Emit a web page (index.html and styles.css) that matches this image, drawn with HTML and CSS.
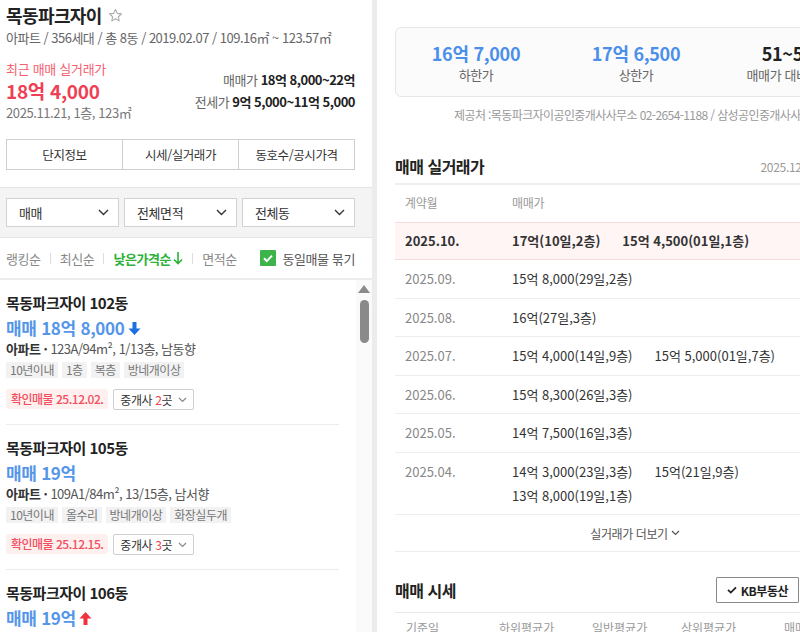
FILE: index.html
```html
<!DOCTYPE html>
<html lang="ko">
<head>
<meta charset="utf-8">
<title>목동파크자이</title>
<link rel="stylesheet" href="styles.css">
</head>
<body>
<div class="app">
  <aside class="left">
    <section class="complex">
      <h1 class="complex-title">목동파크자이
        <svg class="star" width="15" height="15" viewBox="0 0 24 24"><path d="M12 2.5l2.9 6.1 6.6.8-4.9 4.6 1.3 6.6L12 17.3l-5.9 3.3 1.3-6.6-4.9-4.6 6.6-.8z" fill="none" stroke="#a9a9a9" stroke-width="1.7" stroke-linejoin="round"/></svg>
      </h1>
      <p class="complex-meta">아파트 / 356세대 / 총 8동 / 2019.02.07 / 109.16㎡ ~ 123.57㎡</p>
      <div class="complex-prices">
        <div class="recent">
          <p class="recent-label">최근 매매 실거래가</p>
          <p class="recent-price">18억 4,000</p>
          <p class="recent-date">2025.11.21, 1층, 123㎡</p>
        </div>
        <div class="ranges">
          <p><span class="range-label">매매가</span> <b>18억 8,000~22억</b></p>
          <p><span class="range-label">전세가</span> <b>9억 5,000~11억 5,000</b></p>
        </div>
      </div>
      <nav class="tabs">
        <span class="tab">단지정보</span>
        <span class="tab">시세/실거래가</span>
        <span class="tab">동호수/공시가격</span>
      </nav>
    </section>

    <section class="filters">
      <div class="select">매매<svg width="11" height="7" viewBox="0 0 11 7"><path d="M1 1l4.5 4.5L10 1" fill="none" stroke="#333" stroke-width="1.4"/></svg></div>
      <div class="select">전체면적<svg width="11" height="7" viewBox="0 0 11 7"><path d="M1 1l4.5 4.5L10 1" fill="none" stroke="#333" stroke-width="1.4"/></svg></div>
      <div class="select">전체동<svg width="11" height="7" viewBox="0 0 11 7"><path d="M1 1l4.5 4.5L10 1" fill="none" stroke="#333" stroke-width="1.4"/></svg></div>
    </section>

    <section class="sortbar">
      <span class="sort">랭킹순</span><i class="sep"></i>
      <span class="sort">최신순</span><i class="sep"></i>
      <span class="sort active">낮은가격순<svg width="10" height="14" viewBox="0 0 10 14"><path d="M5 1v11.5M1 8.5l4 4 4-4" fill="none" stroke="#2bb13a" stroke-width="1.6"/></svg></span><i class="sep"></i>
      <span class="sort">면적순</span>
      <label class="group-check"><span class="checkbox"><svg width="16" height="16" viewBox="0 0 16 16"><path d="M4 8.3l2.8 2.8L12 5.6" fill="none" stroke="#fff" stroke-width="2"/></svg></span>동일매물 묶기</label>
    </section>

    <div class="listing-wrap">
      <ul class="listings">
        <li class="item">
          <p class="item-title">목동파크자이 102동</p>
          <p class="item-price">매매 18억 8,000<svg class="trend" width="13" height="15" viewBox="0 0 13 15"><path d="M4.5 1h4v6.5h4L6.5 14 .5 7.5h4z" fill="#1c6fe0"/></svg></p>
          <p class="item-info"><b>아파트 ·</b> 123A/94m², 1/13층, 남동향</p>
          <div class="tags"><span>10년이내</span><span>1층</span><span>복층</span><span>방네개이상</span></div>
          <div class="item-foot"><span class="confirm">확인매물 25.12.02.</span><span class="brokers">중개사 <em>2</em>곳<svg width="9" height="6" viewBox="0 0 9 6"><path d="M1 1l3.5 3.5L8 1" fill="none" stroke="#888" stroke-width="1.2"/></svg></span></div>
        </li>
        <li class="item">
          <p class="item-title">목동파크자이 105동</p>
          <p class="item-price">매매 19억</p>
          <p class="item-info"><b>아파트 ·</b> 109A1/84m², 13/15층, 남서향</p>
          <div class="tags"><span>10년이내</span><span>올수리</span><span>방네개이상</span><span>화장실두개</span></div>
          <div class="item-foot"><span class="confirm">확인매물 25.12.15.</span><span class="brokers">중개사 <em>3</em>곳<svg width="9" height="6" viewBox="0 0 9 6"><path d="M1 1l3.5 3.5L8 1" fill="none" stroke="#888" stroke-width="1.2"/></svg></span></div>
        </li>
        <li class="item">
          <p class="item-title">목동파크자이 106동</p>
          <p class="item-price">매매 19억<svg class="trend" width="13" height="15" viewBox="0 0 13 15"><path d="M4.5 14h4V7.5h4L6.5 1 .5 7.5h4z" fill="#f0323f"/></svg></p>
        </li>
      </ul>
      <div class="scrollbar">
        <span class="scroll-up"></span>
        <span class="scroll-thumb"></span>
      </div>
    </div>
  </aside>

  <div class="divider"></div>

  <main class="right">
    <div class="right-inner">
      <div class="summary">
        <div class="stat"><strong class="blue">16억 7,000</strong><span>하한가</span></div>
        <i class="stat-sep"></i>
        <div class="stat"><strong class="blue">17억 6,500</strong><span>상한가</span></div>
        <i class="stat-sep"></i>
        <div class="stat"><strong>51~56%</strong><span>매매가 대비 전세가</span></div>
      </div>
      <p class="source">제공처 :목동파크자이공인중개사사무소 02-2654-1188 / 삼성공인중개사사무소 02-2646-0000</p>

      <div class="section-head">
        <h2>매매 실거래가</h2>
        <span class="stamp">2025.12.18 기준</span>
      </div>
      <div class="deals">
        <div class="deal-row deal-head"><span class="month">계약월</span><span class="prices">매매가</span></div>
        <div class="deal-row current"><span class="month">2025.10.</span><span class="prices"><span>17억(10일,2층)</span><span>15억 4,500(01일,1층)</span></span></div>
        <div class="deal-row"><span class="month">2025.09.</span><span class="prices"><span>15억 8,000(29일,2층)</span></span></div>
        <div class="deal-row"><span class="month">2025.08.</span><span class="prices"><span>16억(27일,3층)</span></span></div>
        <div class="deal-row"><span class="month">2025.07.</span><span class="prices"><span>15억 4,000(14일,9층)</span><span>15억 5,000(01일,7층)</span></span></div>
        <div class="deal-row"><span class="month">2025.06.</span><span class="prices"><span>15억 8,300(26일,3층)</span></span></div>
        <div class="deal-row"><span class="month">2025.05.</span><span class="prices"><span>14억 7,500(16일,3층)</span></span></div>
        <div class="deal-row"><span class="month">2025.04.</span><span class="prices"><span>14억 3,000(23일,3층)</span><span>15억(21일,9층)</span><span>13억 8,000(19일,1층)</span></span></div>
        <div class="more">실거래가 더보기<svg width="9" height="6" viewBox="0 0 9 6"><path d="M1 1l3.5 3.5L8 1" fill="none" stroke="#555" stroke-width="1.2"/></svg></div>
      </div>

      <div class="section-head market-head">
        <h2>매매 시세</h2>
        <button class="source-btn"><svg width="10" height="8" viewBox="0 0 10 8"><path d="M1 3.8l2.8 2.8L9 1.4" fill="none" stroke="#222" stroke-width="1.8"/></svg>KB부동산</button>
      </div>
      <div class="market-cols">
        <span>기준일</span><span>하위평균가</span><span>일반평균가</span><span>상위평균가</span><span>매매가 변동</span>
      </div>
    </div>
  </main>
</div>
</body>
</html>
```

FILE: styles.css
```css
* { box-sizing: border-box; }
html, body { margin: 0; padding: 0; }
body {
  font-family: "Noto Sans CJK KR", "Noto Sans", sans-serif;
  color: #333;
  background: #fff;
  width: 800px;
  height: 632px;
  overflow: hidden;
}
p, h1, h2, ul { margin: 0; padding: 0; }
ul { list-style: none; }

.app { display: flex; height: 632px; }

/* ---------- left pane ---------- */
.left { width: 372px; flex: 0 0 372px; display: flex; flex-direction: column; overflow: hidden; }

.complex { padding: 4px 17px 17px 6px; }
.complex-title {
  font-size: 18px; line-height: 22px; font-weight: 700; color: #222;
  letter-spacing: -0.6px; display: flex; align-items: center; gap: 6px;
}
.star { margin-top: 1px; }
.complex-meta { margin-top: 3px; font-size: 13px; line-height: 18px; color: #666; letter-spacing: -0.5px; }

.complex-prices { display: flex; justify-content: space-between; margin-top: 13px; }
.recent-label { font-size: 13px; line-height: 18px; color: #f35f70; letter-spacing: -0.3px; }
.recent-price { margin-top: 1px; font-size: 19px; line-height: 24px; font-weight: 700; color: #ef3f55; letter-spacing: -0.3px; }
.recent-date { margin-top: 1px; font-size: 13px; line-height: 18px; color: #777; letter-spacing: -0.4px; }
.ranges { margin-top: 9px; text-align: right; }
.ranges p { font-size: 13px; line-height: 22px; letter-spacing: -0.5px; }
.range-label { color: #666; }
.ranges b { color: #222; font-weight: 700; }

.tabs { display: flex; margin-top: 17px; height: 31px; border: 1px solid #cfcfcf; }
.tab {
  flex: 1; display: flex; align-items: center; justify-content: center;
  font-size: 12.5px; color: #333; letter-spacing: -0.4px;
}
.tab + .tab { border-left: 1px solid #cfcfcf; }

.filters {
  display: flex; gap: 5px; padding: 10px 17px 10px 6px;
  background: #f4f4f4; border-top: 1px solid #e4e4e4; border-bottom: 1px solid #e4e4e4;
}
.select {
  flex: 1; height: 29px; background: #fff; border: 1px solid #d2d2d2;
  display: flex; align-items: center; justify-content: space-between;
  padding: 0 9px 0 12px; font-size: 13px; color: #333; letter-spacing: -0.4px;
}

.sortbar {
  height: 42px; display: flex; align-items: center; padding: 0 17px 0 6px;
  border-bottom: 2px solid #ececec; font-size: 13px; letter-spacing: -0.4px;
}
.sort { color: #888; display: inline-flex; align-items: center; gap: 2px; }
.sort.active { color: #2bb13a; font-weight: 700; }
.sep { width: 1px; height: 11px; background: #ddd; margin: 0 9px; }
.group-check { margin-left: auto; display: flex; align-items: center; gap: 6px; color: #555; }
.checkbox { width: 16px; height: 16px; background: #3cb44a; border-radius: 1px; display: block; }
.checkbox svg { display: block; }

.listing-wrap { flex: 1; display: flex; min-height: 0; }
.listings { flex: 1; padding: 0 17px 0 6px; }
.item { padding: 13px 0 14px; border-bottom: 1px solid #ececec; }
.item-title { font-size: 15px; line-height: 20px; font-weight: 700; color: #222; letter-spacing: -0.5px; }
.item-price {
  margin-top: 3px; font-size: 17px; line-height: 24px; font-weight: 700; color: #5596ea;
  letter-spacing: -0.3px; display: flex; align-items: center; gap: 3px;
}
.item-info { font-size: 13px; line-height: 18px; color: #555; letter-spacing: -0.5px; }
.item-info b { color: #333; }
.tags { display: flex; gap: 4px; margin-top: 4px; }
.tags span {
  height: 16px; line-height: 16px; padding: 0 4px; background: #f2f2f2;
  color: #777; font-size: 12px; letter-spacing: -0.5px;
}
.item-foot { display: flex; gap: 5px; margin-top: 11px; }
.confirm {
  height: 20px; line-height: 20px; padding: 0 5px; border-radius: 3px;
  background: #fff0f0; color: #f24e5d; font-size: 12px; letter-spacing: -0.5px; font-weight: 500;
}
.brokers {
  height: 21px; display: flex; align-items: center; gap: 3px; padding: 0 6px;
  border: 1px solid #cfcfcf; border-radius: 2px; font-size: 12px; color: #333; letter-spacing: -0.4px;
}
.brokers em { font-style: normal; color: #f2404e; margin-right: -3px; }
.brokers svg { margin-left: 3px; }

.scrollbar { width: 16px; flex: 0 0 16px; background: #fafafa; padding-top: 5px; display: flex; flex-direction: column; align-items: center; }
.scroll-up { width: 0; height: 0; border-left: 6px solid transparent; border-right: 6px solid transparent; border-bottom: 8px solid #8a8a8a; }
.scroll-thumb { margin-top: 7px; width: 9px; height: 43px; border-radius: 5px; background: #8a8a8a; }

.divider { width: 5px; flex: 0 0 5px; background: #ececec; }

/* ---------- right pane ---------- */
.right { flex: 1; min-width: 0; overflow: hidden; }
.right-inner { width: 498px; padding-left: 18px; }

.summary {
  margin-top: 27px; height: 70px; padding-top: 2px; border: 1px solid #e6e6e6; border-radius: 6px;
  background: #fbfbfb; display: flex; align-items: center;
}
.stat { flex: 0 0 160px; display: flex; flex-direction: column; align-items: center; }
.stat strong { font-size: 18px; line-height: 22px; font-weight: 700; color: #222; letter-spacing: -0.3px; }
.stat strong.blue { color: #4b8fea; }
.stat span { margin-top: 2px; font-size: 13px; line-height: 18px; color: #666; letter-spacing: -0.4px; }
.stat-sep { width: 1px; height: 28px; background: #e3e3e3; }

.source { margin-top: 9px; font-size: 12px; line-height: 18px; color: #999; letter-spacing: -0.6px; padding-left: 59px; white-space: nowrap; }

.section-head { display: flex; align-items: center; margin-top: 30px; height: 24px; }
.section-head h2 { font-size: 16px; line-height: 24px; font-weight: 700; color: #222; letter-spacing: -0.5px; }
.stamp { margin-left: auto; margin-right: 33px; font-size: 12px; color: #999; letter-spacing: -0.3px; }

.deals { margin-top: 5px; border-top: 2px solid #eee; }
.deal-row {
  display: flex; align-items: flex-start; padding: 7px 0 6.5px; line-height: 24px;
  border-bottom: 1px solid #ededed; font-size: 13px;
}
.deal-row .month { flex: 0 0 117px; padding-left: 10px; color: #888; }
.deal-row .prices { display: flex; flex-wrap: wrap; column-gap: 22px; width: 300px; color: #333; }
.deal-head { padding: 6px 0 7px; border-bottom: none; font-size: 12px; letter-spacing: -0.3px; }
.deal-head .month, .deal-head .prices { color: #999; }
.deal-row.current { background: #fff5f5; border-top: 1px solid #fbdada; border-bottom: 1px solid #fbdada; font-weight: 700; padding: 6px 0 6px; }
.deal-row.current .month, .deal-row.current .prices { color: #333; }
.more {
  height: 37px; display: flex; align-items: center; justify-content: center; gap: 3px;
  border-bottom: 1px solid #ededed; font-size: 12px; color: #555; letter-spacing: -0.4px;
}

.market-head { margin-top: 0; height: auto; padding: 25px 0 9px; border-bottom: 1px solid #e9e9e9; }
.source-btn {
  margin-left: auto; margin-right: 76px; height: 26px; width: 83px;
  display: flex; align-items: center; justify-content: center; gap: 4px;
  background: #fff; border: 1px solid #8a8a8a; border-radius: 1px;
  font-family: inherit; font-size: 12px; font-weight: 700; color: #222; letter-spacing: -0.4px;
}
.market-cols { display: flex; padding: 6px 0 0 11px; font-size: 12px; line-height: 18px; color: #999; }
.market-cols span:nth-child(1) { width: 93px; }
.market-cols span:nth-child(2) { width: 93px; }
.market-cols span:nth-child(3) { width: 89px; }
.market-cols span:nth-child(4) { width: 103px; }
```
